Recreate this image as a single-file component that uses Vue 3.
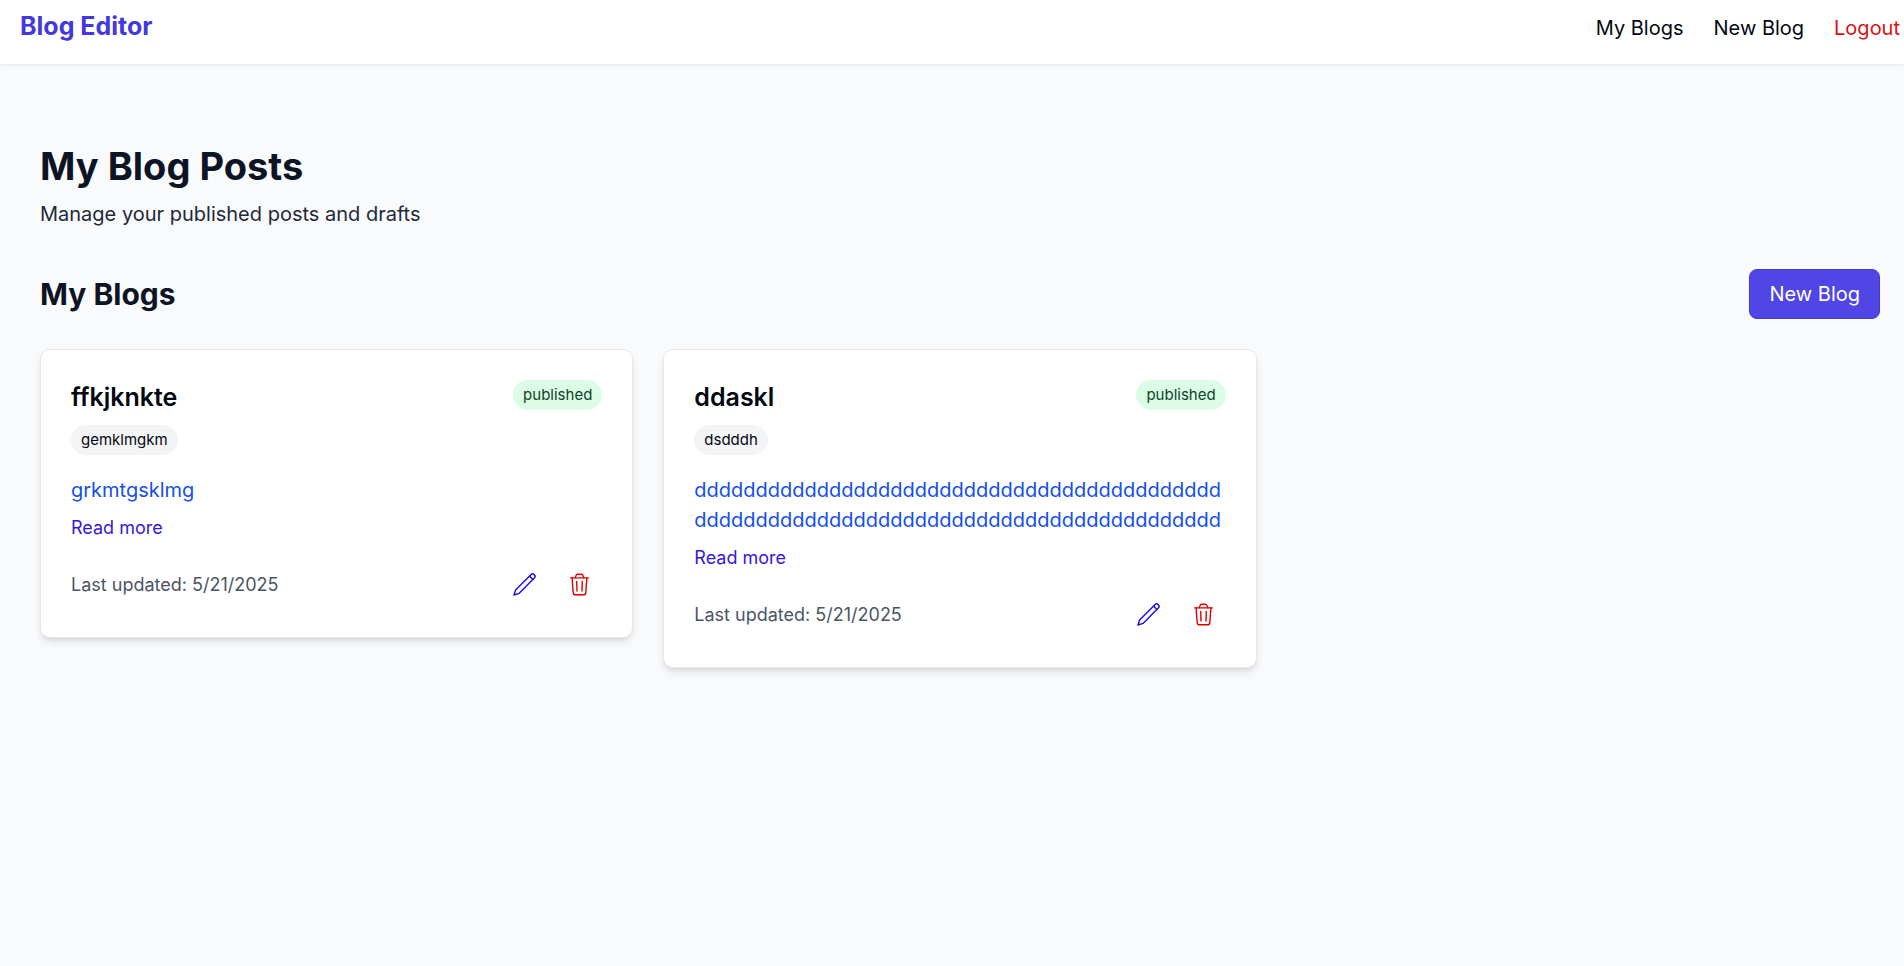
<script setup>
const posts = [
  { id: 1, title: 'ffkjknkte', tag: 'gemklmgkm', status: 'published', body: 'grkmtgsklmg', updated: '5/21/2025' },
  { id: 2, title: 'ddaskl', tag: 'dsdddh', status: 'published', body: 'd'.repeat(86), updated: '5/21/2025' },
]
</script>

<template>
  <div class="page">
    <header class="topbar">
      <a class="brand" href="#">Blog Editor</a>
      <nav class="nav">
        <a href="#">My Blogs</a>
        <a href="#">New Blog</a>
        <button class="logout" type="button">Logout</button>
      </nav>
    </header>
    <main class="main">
      <h1>My Blog Posts</h1>
      <p class="subtitle">Manage your published posts and drafts</p>
      <div class="section-head">
        <h2>My Blogs</h2>
        <button class="new-blog" type="button">New Blog</button>
      </div>
      <div class="grid">
        <article v-for="post in posts" :key="post.id" class="card">
          <div class="card-head">
            <div>
              <h3>{{ post.title }}</h3>
              <span class="pill tag">{{ post.tag }}</span>
            </div>
            <span class="pill status">{{ post.status }}</span>
          </div>
          <p class="body">{{ post.body }}</p>
          <button class="read-more" type="button">Read more</button>
          <div class="card-foot">
            <span class="updated">Last updated: {{ post.updated }}</span>
            <div class="actions">
              <button class="icon edit" type="button" aria-label="Edit post">
                <svg viewBox="0 0 25 25" aria-hidden="true">
                  <path d="M2 23l1.6-5L18.9 2.7a2.4 2.4 0 0 1 3.4 3.4L7 21.4z" />
                  <path d="M17.5 4.1l3.4 3.4" />
                </svg>
              </button>
              <button class="icon delete" type="button" aria-label="Delete post">
                <svg viewBox="0 0 25 25" aria-hidden="true">
                  <path d="M3.7 5.9h17.6" />
                  <path d="M8.2 5.9l.8-2.4q.4-1.3 1.7-1.3h3.6q1.3 0 1.7 1.3l.8 2.4" />
                  <path d="M5.1 5.9l1.1 14.7q.2 2.2 2.3 2.2h8q2.1 0 2.3-2.2l1.1-14.7" />
                  <path d="M9.7 9.4l.3 9.6M15.3 9.4l-.3 9.6" />
                </svg>
              </button>
            </div>
          </div>
        </article>
      </div>
    </main>
  </div>
</template>

<style>
body {
  margin: 0;
  background: #f9fafc;
}
</style>

<style scoped>
.page {
  min-height: 100vh;
  background: #f9fafc;
  color: #030712;
  font-family: Inter, "Liberation Sans", sans-serif;
  font-size: 20px;
  line-height: 30px;
}
h1, h2, h3, p {
  margin: 0;
}
a {
  color: inherit;
  text-decoration: none;
}
button {
  border: 0;
  padding: 0;
  background: none;
  font: inherit;
  color: inherit;
  cursor: pointer;
}
.topbar {
  display: flex;
  justify-content: space-between;
  align-items: baseline;
  padding: 8px 4px 20px 20px;
  background: #fff;
  box-shadow: 0 1px 3px rgba(0, 0, 0, 0.08);
}
.brand {
  font-size: 25px;
  line-height: 36px;
  font-weight: 700;
  color: #4338e0;
}
.nav {
  display: flex;
  gap: 30px;
}
.logout {
  color: #dc1010;
}
.main {
  padding: 80px 24px 40px 40px;
}
h1 {
  font-size: 38px;
  line-height: 44px;
  font-weight: 700;
  color: #0d1424;
}
.subtitle {
  margin-top: 11px;
  color: #1e2939;
}
.section-head {
  display: flex;
  justify-content: space-between;
  align-items: center;
  margin: 40px 0 30px;
}
h2 {
  font-size: 30px;
  line-height: 40px;
  font-weight: 700;
  color: #0d1424;
}
.new-blog {
  padding: 9px 19px;
  border: 1px solid #4338d8;
  border-radius: 8px;
  background: #4f46e5;
  color: #fff;
}
.grid {
  display: grid;
  grid-template-columns: repeat(3, minmax(0, 1fr));
  gap: 30px;
  align-items: start;
}
.card {
  padding: 30px;
  border: 1px solid #e5e7eb;
  border-radius: 10px;
  background: #fff;
  box-shadow: 0 5px 8px -1px rgba(0, 0, 0, 0.1), 0 3px 5px -3px rgba(0, 0, 0, 0.1);
}
.card-head {
  display: flex;
  justify-content: space-between;
  align-items: flex-start;
}
h3 {
  font-size: 25px;
  line-height: 35px;
  font-weight: 600;
}
.pill {
  display: block;
  width: fit-content;
  padding: 5px 10px;
  border-radius: 15px;
  font-size: 15px;
  line-height: 20px;
}
.tag {
  margin-top: 10px;
  background: #f3f4f6;
}
.status {
  background: #dcfce7;
  color: #0a4424;
}
.body {
  margin-top: 20px;
  color: #144fee;
  overflow-wrap: anywhere;
}
.read-more {
  display: block;
  margin: 10px 0 22px;
  font-size: 18px;
  line-height: 25px;
  color: #3418dc;
}
.card-foot {
  display: flex;
  justify-content: space-between;
  align-items: center;
}
.updated {
  font-size: 18px;
  line-height: 25px;
  color: #4a5565;
}
.actions {
  display: flex;
  gap: 10px;
}
.icon {
  padding: 10px;
}
.icon svg {
  display: block;
  width: 25px;
  height: 25px;
  fill: none;
  stroke: currentColor;
  stroke-width: 1.4;
  stroke-linecap: round;
  stroke-linejoin: round;
}
.edit {
  color: #1c0ce0;
}
.delete {
  color: #e00000;
}
</style>
